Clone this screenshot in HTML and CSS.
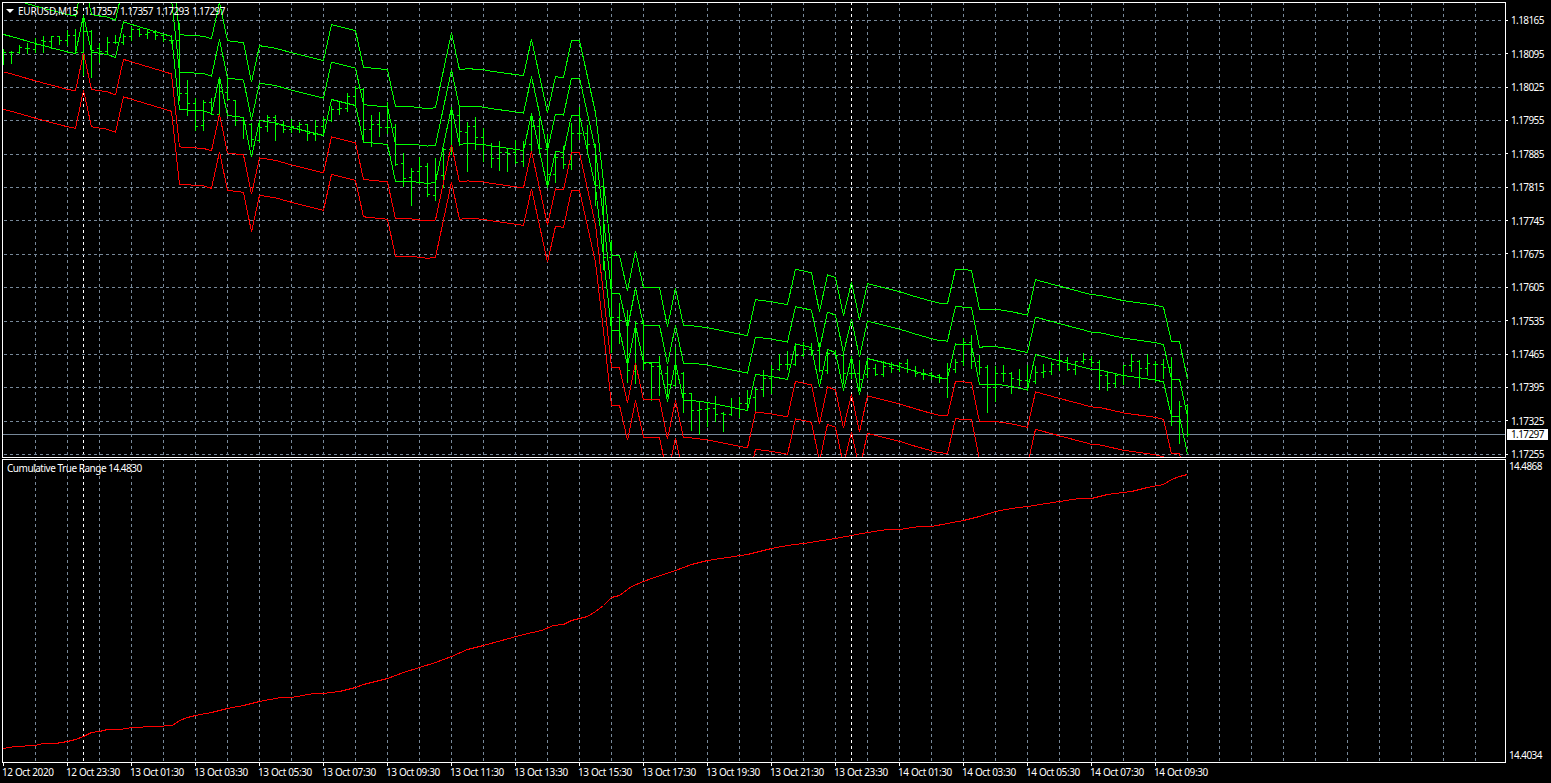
FILE: index.html
```html
<!DOCTYPE html>
<html lang="en">
<head>
<meta charset="UTF-8">
<meta name="viewport" content="width=device-width, initial-scale=1.0">
<title>EURUSD,M15</title>
<link rel="stylesheet" href="styles.css">
</head>
<body>

<div class="terminal">
    <!-- Price chart -->
    <section class="pane price-pane">
        <svg id="priceChart" viewBox="3 3 1502 454" width="1502" height="454"></svg>
        <div class="pane-title">
            <span class="arrow"></span>
            <span class="symbol">EURUSD,M15</span>
            <span class="quotes">1.17357 1.17357 1.17293 1.17297</span>
        </div>
    </section>
    <div class="scale price-scale" id="priceScale">
        <div class="current-price">1.17297</div>
    </div>

    <!-- Indicator -->
    <section class="pane indicator-pane">
        <svg id="rangeChart" viewBox="3 460 1502 302" width="1502" height="302"></svg>
        <div class="pane-title indicator-title">Cumulative True Range 14.4830</div>
    </section>
    <div class="scale range-scale">
        <span>14.4868</span>
        <span>14.4034</span>
    </div>

    <div class="time-scale" id="timeScale"></div>
</div>

<script src="chart.js"></script>
</body>
</html>
```
FILE: styles.css
```css
body {
    margin: 0;
    background: #000;
    color: #fff;
    font-family: "Noto Sans", "Open Sans", sans-serif;
    font-size: 10px;
    letter-spacing: -0.6px;
    line-height: 12px;
    overflow: hidden;
}

.terminal {
    display: grid;
    grid-template-columns: 1504px 45px;
    grid-template-rows: 456px 304px 20px;
    row-gap: 1px;
    padding: 2px 0 0 2px;
}

.pane {
    position: relative;
    box-sizing: border-box;
    border: 1px solid #fff;
    overflow: hidden;
}

.pane svg {
    display: block;
    shape-rendering: crispEdges;
}

.grid {
    stroke: #778899;
    stroke-dasharray: 3 3;
}

.day {
    stroke: #fff;
    stroke-dasharray: 3 3;
}

.bid {
    stroke: #778899;
}

.up {
    stroke: #00ff00;
    fill: none;
}

.down {
    stroke: #ff0000;
    fill: none;
}

.pane-title {
    position: absolute;
    top: 2px;
    left: 3px;
    display: flex;
    align-items: center;
    white-space: pre;
}

.arrow {
    border: 4px solid transparent;
    border-top-color: #fff;
    border-bottom: 0;
    margin-right: 4px;
}

.symbol {
    width: 66px;
    letter-spacing: -0.2px;
}

.quotes {
    letter-spacing: -0.58px;
    word-spacing: 1px;
}

.indicator-title {
    left: 4px;
    letter-spacing: -0.48px;
}

.scale {
    display: flex;
    flex-direction: column;
    justify-content: space-between;
}

.price-scale {
    position: relative;
    height: 446px;
    padding-top: 12.3px;
}

.price-scale span {
    display: flex;
    align-items: center;
    height: 12px;
}

.price-scale span::before {
    content: "";
    width: 2px;
    height: 1px;
    margin-right: 3px;
    background: #fff;
}

.current-price {
    position: absolute;
    top: 427px;
    left: 1px;
    width: 37px;
    height: 11px;
    padding-left: 4px;
    line-height: 11px;
    background: #fff;
    color: #000;
}

.range-scale {
    padding: 1px 0 0 3px;
    height: 301px;
}

.time-scale {
    display: flex;
    margin-top: -1px;
}

.time-scale span {
    width: 64px;
    flex: none;
    letter-spacing: -0.38px;
    white-space: nowrap;
}

.time-scale span::before {
    content: "";
    display: block;
    width: 1px;
    height: 3px;
    margin-left: 1px;
    background: #fff;
}
```
FILE: chart.js
```javascript
const STEP = 8;
const FIRST_X = 3;
const BAND = 37.4;

const priceLines = [20, 54, 87, 120, 154, 187, 220, 254, 287, 321, 354, 387, 421, 454];

// open, high, low, close of every bar, in thirds of a pixel
const bars = [
    [157,148,193,157],[157,154,190,157],[157,136,160,142],[144,130,160,144],[148,115,156,132],
    [120,108,158,123],[123,108,145,108],[110,108,134,121],[121,92,135,106],[106,88,160,157],
    [157,45,225,93],[93,92,231,150],[145,130,188,154],[154,112,160,126],[126,105,130,127],
    [128,103,134,109],[109,82,120,88],[88,85,108,103],[103,90,115,97],[97,92,117,105],
    [105,103,124,119],[120,106,130,122],[122,70,300,280],[280,240,347,310],[311,295,390,379],
    [376,300,392,307],[307,294,343,343],[343,233,345,273],[276,230,300,299],[301,300,375,361],
    [361,352,414,373],[373,370,440,418],[421,360,424,382],[379,346,395,352],[352,345,421,372],
    [376,364,396,388],[388,357,398,379],[379,366,396,373],[373,372,420,400],[402,360,420,379],
    [379,351,405,358],[360,320,364,327],[327,304,342,325],[325,279,333,289],[289,259,320,265],
    [268,266,427,388],[388,345,440,373],[373,336,408,382],[382,306,400,382],[382,372,495,493],
    [490,459,560,535],[532,506,617,514],[514,471,550,499],[499,489,590,583],[586,474,600,523],
    [526,444,563,447],[448,322,462,343],[346,316,435,394],[397,367,513,379],[379,351,447,412],
    [412,384,483,433],[435,429,501,475],[475,423,510,457],[457,445,513,460],[457,420,490,487],
    [484,423,498,433],[433,341,460,379],[379,355,460,445],[448,402,557,523],[523,455,546,472],
    [472,440,504,493],[493,370,507,400],[400,322,418,400],[400,375,453,433],[433,433,615,556],
    [559,545,807,772],[772,720,1058,952],[952,909,1029,962],[962,930,1146,1111],[1114,965,1149,970],
    [970,960,1109,1090],[1090,1087,1200,1098],[1099,1068,1185,1120],[1120,1098,1190,1153],[1156,1043,1160,1120],
    [1120,1117,1236,1180],[1180,1180,1290,1231],[1231,1203,1302,1228],[1228,1206,1278,1225],[1225,1188,1263,1242],
    [1240,1236,1293,1243],[1243,1194,1245,1222],[1225,1191,1253,1210],[1210,1170,1230,1195],[1192,1165,1233,1168],
    [1168,1110,1188,1135],[1135,1095,1180,1108],[1108,1062,1110,1093],[1093,1054,1108,1093],[1093,1035,1095,1066],
    [1066,1026,1068,1048],[1048,1029,1065,1051],[1051,1031,1115,1111],[1111,1050,1119,1060],[1060,1051,1068,1066],
    [1066,1053,1150,1120],[1120,1068,1135,1120],[1120,1080,1170,1138],[1123,1075,1132,1105],[1105,1092,1125,1123],
    [1123,1083,1130,1099],[1099,1086,1116,1105],[1108,1086,1113,1090],[1090,1077,1116,1108],[1111,1098,1128,1120],
    [1123,1107,1137,1120],[1120,1116,1137,1126],[1126,1122,1146,1132],[1135,1089,1191,1108],[1108,1077,1116,1087],
    [1084,1014,1095,1027],[1027,1005,1104,1084],[1084,1065,1122,1102],[1102,1095,1236,1162],[1162,1098,1203,1120],
    [1120,1095,1143,1120],[1120,1116,1179,1135],[1138,1107,1155,1141],[1141,1095,1170,1144],[1144,1098,1149,1117],
    [1117,1092,1131,1114],[1114,1086,1122,1093],[1093,1053,1111,1081],[1081,1071,1110,1108],[1108,1083,1122,1084],
    [1084,1059,1090,1078],[1078,1068,1098,1087],[1087,1080,1167,1126],[1126,1114,1170,1150],[1150,1120,1162,1126],
    [1126,1095,1152,1096],[1096,1062,1113,1084],[1084,1080,1162,1105],[1105,1062,1125,1090],[1093,1083,1143,1093],
    [1093,1077,1134,1102],[1102,1071,1275,1263],[1263,1203,1329,1219],[1216,1215,1310,1303]
];

// lowest green band, the other four are shifted copies
const base = [
    [3,34],[11,36],[35,43],[67,51.5],[75,53],[83,15],[91,51.5],[107,54],[115,57],[123,21.5],
    [171,36],[179,109],[203,110.5],[211,113],[219,76.5],[227,115],[243,117],[251,156.5],[259,120],
    [275,122.5],[291,127],[323,135],[331,99],[355,105],[363,141.5],[387,144],[395,181],[411,181],
    [427,183],[435,182],[451,107],[459,144],[467,143],[483,144],[491,145.5],[523,150],[531,113.5],
    [547,187],[555,151],[563,152],[571,115],[579,115],[587,151],[595,187],[603,256],[611,330],
    [619,330],[627,365],[635,325],[643,362],[659,362],[667,401],[675,362.5],[683,400],[691,400],
    [707,402],[747,410],[755,374],[771,376],[787,379],[795,343.5],[811,347],[819,386],[827,349],
    [835,352],[843,390],[851,356.5],[859,394],[867,358],[883,362],[899,366],[915,371],[931,375.5],
    [939,377.5],[947,378],[955,343.5],[971,344.5],[979,384],[995,383.5],[1011,386],[1027,389.5],
    [1035,354],[1059,360.5],[1091,369],[1099,369.5],[1123,375],[1155,379.5],[1163,381.5],[1171,416],
    [1179,416],[1187,453.5]
];

const range = [
    [3,748],[15,746],[34,745],[43,743],[55,743],[67,741],[75,739],[83,736],[91,732],[99,731],
    [107,729],[120,729],[131,727],[155,726],[172,725],[179,720],[187,717],[195,715],[211,712],
    [227,708],[243,705],[259,701],[280,697],[291,697],[313,693],[323,693],[339,691],[355,687],
    [363,684],[387,678],[403,672],[435,662],[451,656],[467,649],[483,645],[523,634],[541,630],
    [553,625],[563,624],[571,620],[587,616],[595,611],[603,605],[611,597],[619,595],[631,586],
    [643,581],[651,578],[675,570],[691,564],[707,560],[727,557],[747,554],[771,548],[787,545],
    [803,543],[835,538],[851,535],[867,532],[887,529],[899,529],[919,526],[931,526],[947,523],
    [963,520],[979,516],[995,511],[1011,508],[1027,506],[1059,501],[1079,498],[1091,498],[1107,494],
    [1131,491],[1147,487],[1163,484],[1171,479],[1179,476],[1187,474]
];

function line(cls, x1, y1, x2, y2) {
    return `<path class="${cls}" d="M${x1} ${y1}L${x2} ${y2}"/>`;
}

function polyline(cls, points, dy) {
    const pts = points.map(p => (p[0] + 0.5) + ',' + (p[1] + dy + 0.5)).join(' ');
    return `<polyline class="${cls}" points="${pts}"/>`;
}

function verticals(top, bottom) {
    let out = '';
    for (let x = 35; x < 1500; x += 32) {
        out += line('grid', x + 0.5, top, x + 0.5, bottom);
    }
    [83, 851].forEach(x => {
        out += line('day', x + 0.5, top, x + 0.5, bottom);
    });
    return out;
}

function drawPrice() {
    let out = verticals(2, 457);
    priceLines.forEach(y => {
        out += line('grid', 4, y + 0.5, 1503, y + 0.5);
    });
    out += line('bid', 3, 434.5, 1505, 434.5);

    let d = '';
    bars.forEach((bar, i) => {
        const x = FIRST_X + i * STEP;
        const [o, h, l, c] = bar.map(v => Math.floor(v / 3));
        d += `M${x + 0.5} ${h}V${l + 1}M${x - 2} ${o + 0.5}H${x}M${x} ${c + 0.5}H${x + 3}`;
    });
    out += `<path class="up" d="${d}"/>`;

    [-2, -1, 0].forEach(n => out += polyline('up', base, n * BAND));
    [1, 2].forEach(n => out += polyline('down', base, n * BAND));
    document.getElementById('priceChart').innerHTML = out;
}

function drawRange() {
    document.getElementById('rangeChart').innerHTML = verticals(458, 762) + polyline('down', range, 0);
}

function drawScales() {
    const scale = document.getElementById('priceScale');
    priceLines.forEach((y, i) => {
        const label = document.createElement('span');
        label.textContent = (1.18165 - i * 0.0007).toFixed(5);
        scale.appendChild(label);
    });

    const times = ['12 Oct 2020', '12 Oct 23:30'];
    for (let i = 0; i < 17; i++) {
        const hour = String((1 + i * 2) % 24).padStart(2, '0');
        times.push((i < 12 ? '13' : '14') + ' Oct ' + hour + ':30');
    }
    document.getElementById('timeScale').innerHTML = times.map(t => `<span>${t}</span>`).join('');
}

drawPrice();
drawRange();
drawScales();
```
